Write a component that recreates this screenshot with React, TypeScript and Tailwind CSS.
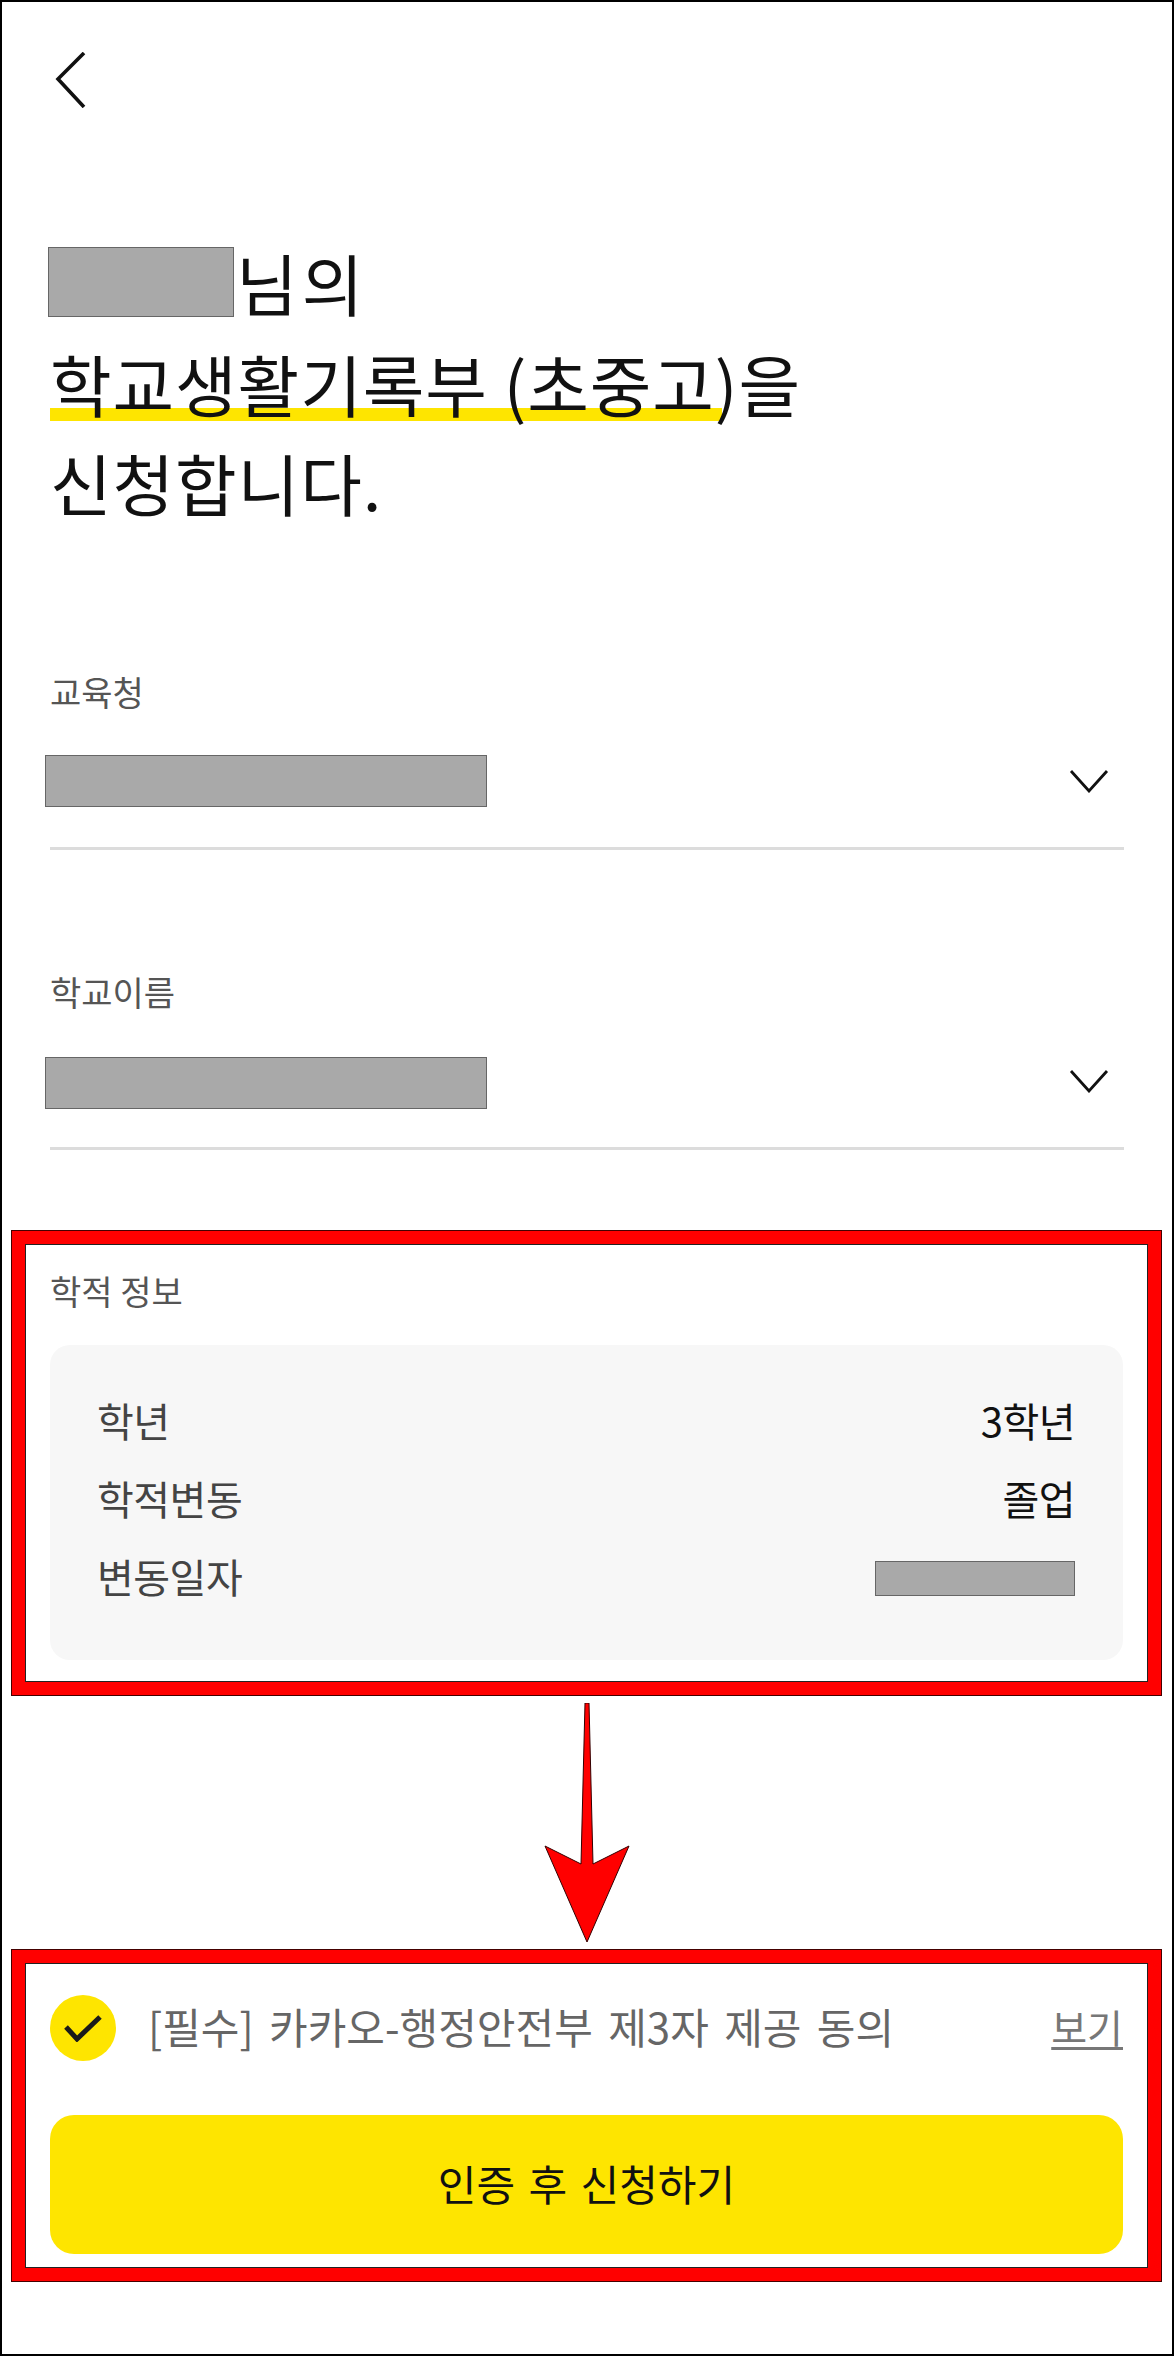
// Application screen for a school record request, with the red review annotations on top of it.
const FONT = "font-['Noto_Sans_CJK_KR','Noto_Sans',sans-serif]";

function Redacted(props: { className: string }) {
  return <div className={`border border-[#666] bg-[#a9a9a9] ${props.className}`} />;
}

function ChevronDown() {
  return (
    <svg width="40" height="24" viewBox="0 0 40 24" fill="none" className="mr-[15px]">
      <path d="M2 2 L20 22 L38 2" stroke="#111" strokeWidth="2.8" />
    </svg>
  );
}

function SelectField(props: { label: string; gap: string; after: string; chevron?: string }) {
  return (
    <div className="px-[48px]">
      <p className="text-[34px] leading-[40px] text-[#555]">{props.label}</p>
      <div className={`flex h-[52px] items-center justify-between ${props.gap}`}>
        <Redacted className="ml-[-5px] h-[52px] w-[442px]" />
        <div className={props.chevron}>
          <ChevronDown />
        </div>
      </div>
      <div className={`h-[3px] bg-[#dcdcdc] ${props.after}`} />
    </div>
  );
}

function RedBox(props: { className: string; children: React.ReactNode }) {
  return (
    <div className={`ml-[9px] w-[1151px] border border-[#400] ${props.className}`}>
      <div className="h-full border-[13px] border-[#f00]">
        <div className="h-full border border-[#222] bg-white">{props.children}</div>
      </div>
    </div>
  );
}

function InfoRow(props: { label: string; children: React.ReactNode }) {
  return (
    <div className="flex h-[78px] items-center justify-between text-[40px] tracking-[-0.5px]">
      <span className="ml-[-2px] text-[#444]">{props.label}</span>
      {props.children}
    </div>
  );
}

export default function App() {
  return (
    <div className={`h-[2356px] w-[1174px] overflow-hidden border-2 border-black bg-white text-[#111] ${FONT}`}>
      <div className="mt-[50px] ml-[53px]">
        <svg width="32" height="56" viewBox="0 0 32 56" fill="none">
          <path d="M29 1 L3 27 L29 55" stroke="#111" strokeWidth="3.6" />
        </svg>
      </div>

      <h1 className="mt-[124px] px-[48px] text-[67px] leading-[99px] font-normal tracking-[0.9px]">
        <div className="ml-[-2px] flex items-center">
          <Redacted className="h-[70px] w-[186px]" />
          <span className="ml-[2px] tracking-[4px]">님의</span>
        </div>
        <div className="mt-[2px]">
          <span className="mr-[-7px] inline-block bg-[linear-gradient(transparent_75px,#fee500_75px,#fee500_88px,transparent_88px)] pr-[7px]">
            학교생활기록부 (초중고
          </span>
          )을
        </div>
        <div>신청합니다.</div>
      </h1>

      <div className="mt-[141px]">
        <SelectField label="교육청" gap="mt-[43px]" after="mt-[40px]" />
      </div>
      <div className="mt-[122px]">
        <SelectField label="학교이름" gap="mt-[45px]" after="mt-[38px]" chevron="mb-[5px]" />
      </div>

      <RedBox className="mt-[80px] h-[466px]">
        <div className="px-[24px] pt-[26px]">
          <p className="text-[34px] leading-[40px] text-[#555]">학적 정보</p>
          <div className="mt-[34px] h-[315px] rounded-[20px] bg-[#f7f7f7] px-[49px] pt-[36px]">
            <InfoRow label="학년">
              <span className="mr-[-1px]">3학년</span>
            </InfoRow>
            <InfoRow label="학적변동">
              <span className="mr-[-1px]">졸업</span>
            </InfoRow>
            <InfoRow label="변동일자">
              <Redacted className="mt-[5px] mr-[-1px] h-[35px] w-[200px]" />
            </InfoRow>
          </div>
        </div>
      </RedBox>

      <div className="flex h-[253px] items-start justify-center pt-[7px]">
        <svg width="90" height="240" viewBox="0 0 90 240" className="mr-[1px]">
          <path
            d="M43 0 L47 0 L51 161 L87 143 L45 239 L3 143 L39 161 Z"
            fill="#f00"
            stroke="#300"
            strokeWidth="1"
          />
        </svg>
      </div>

      <RedBox className="h-[333px]">
        <div className="px-[24px]">
          <div className="flex items-center pt-[31px]">
            <div className="flex h-[66px] w-[66px] shrink-0 items-center justify-center rounded-full bg-[#fee500]">
              <svg width="38" height="28" viewBox="0 0 38 28" fill="none">
                <path d="M2 13 L13 25 L36 3" stroke="#1a1a1a" strokeWidth="5" />
              </svg>
            </div>
            <span className="mb-[4px] ml-[32px] text-[42px] leading-[48px] [word-spacing:6px] text-[#666]">
              [필수] 카카오-행정안전부 제3자 제공 동의
            </span>
            <span className="mb-[4px] ml-auto text-[39px] leading-[48px] text-[#777] underline underline-offset-4">
              보기
            </span>
          </div>
          <button
            type="button"
            className="mt-[54px] flex h-[139px] w-full items-center justify-center rounded-[24px] bg-[#fee500] pb-[4px] text-[42px] [word-spacing:4px] text-[#111]"
          >
            인증 후 신청하기
          </button>
        </div>
      </RedBox>
    </div>
  );
}
